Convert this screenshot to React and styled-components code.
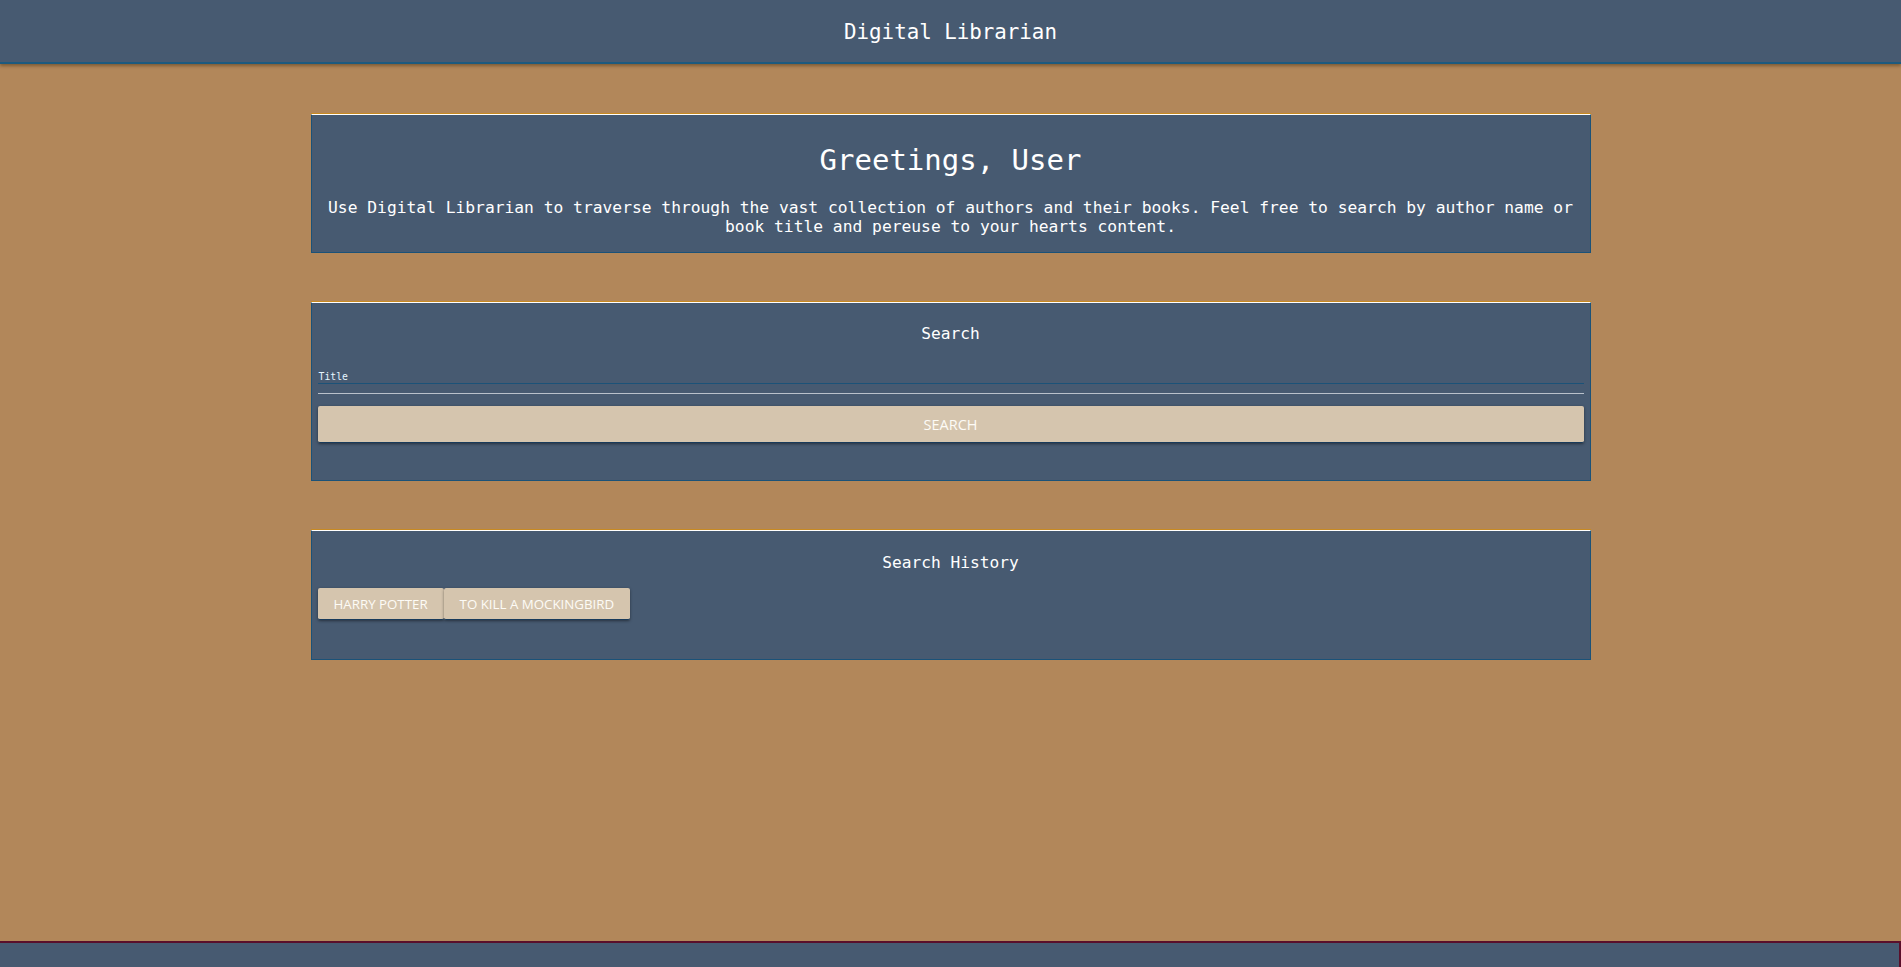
import React from 'react'
import styled, { createGlobalStyle } from 'styled-components'

const GlobalStyle = createGlobalStyle`
  html, body {
    margin: 0;
    padding: 0;
    background: #b2875a;
  }
  body {
    font-family: "DejaVu Sans Mono", "Liberation Mono", monospace;
    color: #fff;
  }
`

const Page = styled.div`
  min-height: 100vh;
  display: flex;
  flex-direction: column;
`

const Header = styled.header`
  height: 60px;
  padding-top: 2px;
  background: #475a71;
  border-bottom: 2px solid #1d5a7e;
  box-shadow: 0 2px 3px rgba(60, 40, 10, 0.45);
  display: flex;
  align-items: center;
  justify-content: center;
  font-size: 20.8px;
`

const Main = styled.main`
  flex: 1;
  display: flex;
  flex-direction: column;
  align-items: center;
  gap: 49px;
  padding-top: 50px;
`

const Card = styled.section`
  box-sizing: border-box;
  width: 1280px;
  background: #475a71;
  border: 1px solid #1b5278;
  border-top: 1px solid #ffffff;
  box-shadow: 0 -1px 0 #c88a22;
  padding: ${({ pad }) => pad || '0 6px'};
  text-align: center;
`

const Greeting = styled.h1`
  margin: 28px 0 22px;
  font-size: 29px;
  font-weight: normal;
  line-height: 34px;
`

const Intro = styled.p`
  margin: 0;
  font-size: 16.3px;
  line-height: 18.5px;
`

const CardTitle = styled.h2`
  margin: 0;
  font-size: 16.2px;
  font-weight: normal;
  line-height: 20px;
`

const Field = styled.label`
  display: flex;
  flex-direction: column;
  align-items: flex-start;
  margin-top: 27px;
`

const FieldLabel = styled.span`
  font-size: 9.8px;
  line-height: 12px;
  color: #e6f6ff;
  margin-left: 1px;
`

const Input = styled.input`
  box-sizing: border-box;
  width: 100%;
  height: 11px;
  background: transparent;
  border: none;
  border-top: 1px solid #1b5278;
  border-bottom: 1px solid #b9c1cb;
  margin-top: 0;
  outline: none;
`

const Button = styled.button`
  box-sizing: border-box;
  height: ${({ tall }) => (tall ? '37px' : '32px')};
  width: ${({ full }) => (full ? '100%' : 'auto')};
  padding: 0 16px;
  background: #d5c5ae;
  color: #fdfbf6;
  border: none;
  border-bottom: 1px solid #183a5a;
  border-radius: 2px;
  box-shadow: 0 1px 3px rgba(0, 0, 0, 0.45);
  font-family: "Open Sans", "Noto Sans", sans-serif;
  font-size: ${({ tall }) => (tall ? '14.5px' : '13.3px')};
  text-transform: uppercase;
  cursor: pointer;
`

const SearchButton = styled(Button)`
  margin-top: 12px;
  margin-bottom: 37px;
`

const History = styled.div`
  display: flex;
  margin-top: 15px;
  margin-bottom: 39px;
`

const Footer = styled.footer`
  height: 24px;
  background: #475a71;
  border-top: 2px solid #5a0f2a;
  border-right: 2px solid #5a0f2a;
  margin-top: 50px;
`

const history = ['Harry Potter', 'To Kill a Mockingbird']

export default function App() {
  return (
    <Page>
      <GlobalStyle />
      <Header>Digital Librarian</Header>
      <Main>
        <Card pad="0 8px 16px">
          <Greeting>Greetings, User</Greeting>
          <Intro>
            Use Digital Librarian to traverse through the vast collection of authors and their books. Feel free to search by author name or book title and pereuse to your hearts content.
          </Intro>
        </Card>

        <Card pad="21px 6px 0">
          <CardTitle>Search</CardTitle>
          <Field>
            <FieldLabel>Title</FieldLabel>
            <Input />
          </Field>
          <SearchButton tall full>Search</SearchButton>
        </Card>

        <Card pad="22px 6px 0">
          <CardTitle>Search History</CardTitle>
          <History>
            {history.map(item => (
              <Button key={item}>{item}</Button>
            ))}
          </History>
        </Card>
      </Main>
      <Footer />
    </Page>
  )
}
